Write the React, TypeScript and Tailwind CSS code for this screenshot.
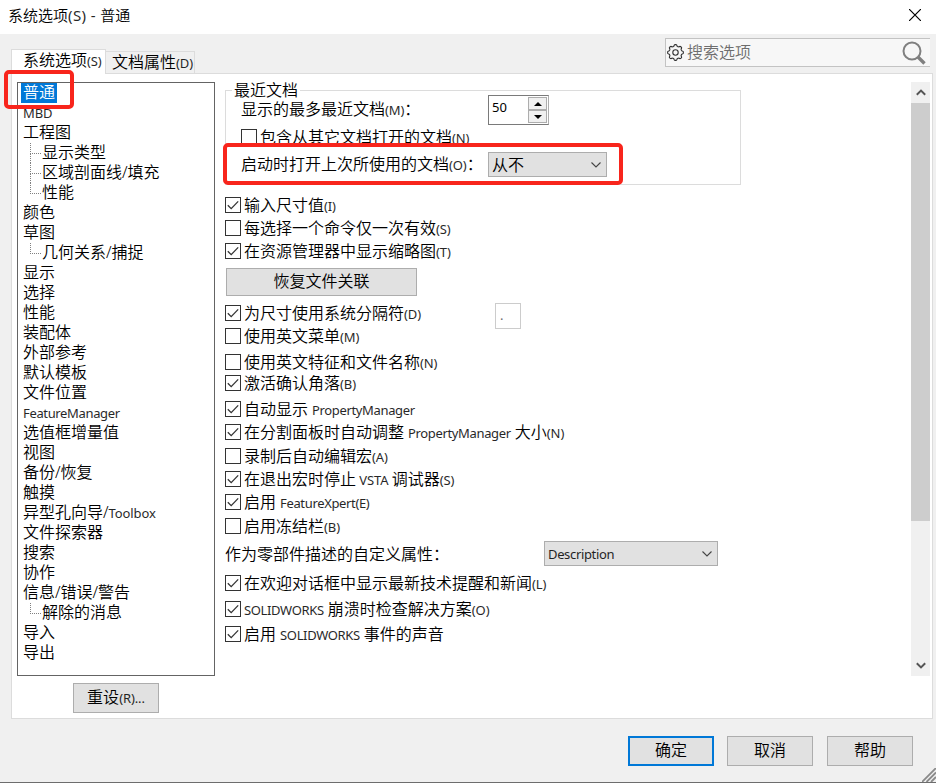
import clsx from "clsx";

type TreeNode = {
  label: string;
  child?: boolean;
  last?: boolean;
  selected?: boolean;
};

const tree: TreeNode[] = [
  { label: "普通", selected: true },
  { label: "MBD" },
  { label: "工程图" },
  { label: "显示类型", child: true },
  { label: "区域剖面线/填充", child: true },
  { label: "性能", child: true, last: true },
  { label: "颜色" },
  { label: "草图" },
  { label: "几何关系/捕捉", child: true, last: true },
  { label: "显示" },
  { label: "选择" },
  { label: "性能" },
  { label: "装配体" },
  { label: "外部参考" },
  { label: "默认模板" },
  { label: "文件位置" },
  { label: "FeatureManager" },
  { label: "选值框增量值" },
  { label: "视图" },
  { label: "备份/恢复" },
  { label: "触摸" },
  { label: "异型孔向导/Toolbox" },
  { label: "文件探索器" },
  { label: "搜索" },
  { label: "协作" },
  { label: "信息/错误/警告" },
  { label: "解除的消息", child: true, last: true },
  { label: "导入" },
  { label: "导出" },
];

// Latin runs are set smaller than the Chinese text around them
function Label({ text, className }: { text: string; className?: string }) {
  const runs = text.split(/([\x20-\x2e\x30-\x7e]+|\/(?=[A-Za-z]))/).filter(Boolean);
  return (
    <span className={clsx("whitespace-pre text-base leading-5", className)}>
      {runs.map((run, i) =>
        /^[\x20-\x7e]/.test(run) && run !== "/" ? (
          <span
            key={i}
            className={clsx(
              "text-[13px] opacity-85",
              run.length > 7 ? "tracking-[-0.35px] [word-spacing:1px]" : "tracking-[-0.1px]",
            )}
          >
            {run}
          </span>
        ) : (
          <span key={i} className="font-[350]">
            {run}
          </span>
        ),
      )}
    </span>
  );
}

function Checkbox({
  label,
  checked,
  className,
  children,
}: {
  label: string;
  checked?: boolean;
  className?: string;
  children?: React.ReactNode;
}) {
  return (
    <div className={clsx("flex h-4 items-start", className)}>
      <span className="flex size-4 shrink-0 items-center justify-center border border-[#333] bg-white">
        {checked ? (
          <svg width="14" height="14" viewBox="0 0 14 14" fill="none">
            <path d="M1.8 7.2 5.2 10.6 12.2 3.4" stroke="#333" strokeWidth="1.3" />
          </svg>
        ) : null}
      </span>
      <Label text={label} className="-mt-[2px] ml-[3px]" />
      {children}
    </div>
  );
}

function Select({ value, className }: { value: string; className?: string }) {
  return (
    <div
      className={clsx(
        "flex items-center justify-between border border-[#adadad] bg-[#e1e1e1] pr-[5px] pl-[3px]",
        className,
      )}
    >
      <Label text={value} />
      <svg width="10" height="6" viewBox="0 0 10 6" fill="none">
        <path d="M0.5 0.5 5 5 9.5 0.5" stroke="#444" strokeWidth="1.1" />
      </svg>
    </div>
  );
}

function Button({
  label,
  primary,
  className,
}: {
  label: string;
  primary?: boolean;
  className?: string;
}) {
  return (
    <button
      className={clsx(
        "flex items-center justify-center bg-[#e1e1e1] pb-0.5",
        primary ? "border-2 border-[#0078d7]" : "border border-[#adadad]",
        className,
      )}
    >
      <Label text={label} />
    </button>
  );
}

// eight soft lobes around the centre
const gearPoints = Array.from({ length: 96 }, (_, i) => {
  const a = (i / 96) * Math.PI * 2;
  const r = 7.1 + 0.8 * Math.tanh(2 * Math.cos(8 * a));
  return `${(8.5 + r * Math.cos(a)).toFixed(2)},${(8.5 + r * Math.sin(a)).toFixed(2)}`;
}).join(" ");

function GearIcon() {
  return (
    <svg
      className="mb-px"
      width="17"
      height="17"
      viewBox="0 0 17 17"
      fill="none"
      stroke="#333"
      strokeWidth="1.1"
    >
      <polygon points={gearPoints} strokeLinejoin="round" />
      <circle cx="8.5" cy="8.5" r="2.7" />
    </svg>
  );
}

function Tree() {
  return (
    <div className="h-[594px] w-[198px] border border-[#646464] bg-white">
      {tree.map((node, i) => (
        <div key={i} className="flex h-5">
          {node.child ? (
            <span className="ml-3 flex h-5 w-[11px] shrink-0 flex-col">
              <span className="h-[11px] border-b border-l border-dotted border-[#808080]" />
              {!node.last && <span className="h-[9px] border-l border-dotted border-[#808080]" />}
            </span>
          ) : null}
          <span
            className={clsx(
              "flex h-5 items-center pb-0.5",
              node.child ? "pl-px" : "ml-[3px] px-0.5",
              node.selected && "bg-[#0078d7] text-white",
            )}
          >
            <Label text={node.label} />
          </span>
        </div>
      ))}
    </div>
  );
}

function RecentDocuments() {
  return (
    <fieldset className="relative mt-2 h-[95px] w-[516px] border border-[#dcdcdc]">
      <span className="absolute -top-[11px] left-[6px] bg-white px-0.5 leading-5">
        <Label text="最近文档" />
      </span>
      <div className="mt-1 flex h-[30px] items-center pl-[15px]">
        <Label text="显示的最多最近文档(M)：" className="w-[247px] pb-0.5" />
        <div className="flex h-[30px] w-[61px] border border-[#7a7a7a] border-r-[#adadad] bg-white">
          <span className="flex-1 pt-px pl-[3px] text-[13px] leading-5">50</span>
          <div className="flex w-5 flex-col p-px pl-0">
            <span className="flex flex-1 items-center justify-center border border-[#adadad] bg-[#f0f0f0]">
              <svg width="8" height="4" viewBox="0 0 8 4">
                <path d="M0 4 4 0 8 4z" />
              </svg>
            </span>
            <span className="flex flex-1 items-center justify-center border border-[#adadad] bg-[#f0f0f0]">
              <svg width="8" height="4" viewBox="0 0 8 4">
                <path d="M0 0h8L4 4z" />
              </svg>
            </span>
          </div>
        </div>
      </div>
      <Checkbox label="包含从其它文档打开的文档(N)" className="mt-1 ml-[15px]" />
      <div className="mt-[7px] flex h-[25px] items-center pl-[15px]">
        <Label text="启动时打开上次所使用的文档(O)：" className="w-[247px]" />
        <Select value="从不" className="h-[25px] w-[119px]" />
      </div>
    </fieldset>
  );
}

function GeneralOptions() {
  return (
    <div className="ml-[10px] flex-1">
      <RecentDocuments />
      <Checkbox checked label="输入尺寸值(I)" className="mt-3" />
      <Checkbox label="每选择一个命令仅一次有效(S)" className="mt-[7px]" />
      <Checkbox checked label="在资源管理器中显示缩略图(T)" className="mt-[7px]" />
      <Button label="恢复文件关联" className="mt-[9px] ml-px h-7 w-[191px]" />
      <Checkbox checked label="为尺寸使用系统分隔符(D)" className="mt-[9px] w-[296px]">
        <span className="-mt-0.5 ml-auto h-[26px] w-[26px] shrink-0 border border-[#ccc] pl-1 text-[13px] leading-[22px] text-[#6d6d6d]">
          .
        </span>
      </Checkbox>
      <Checkbox label="使用英文菜单(M)" className="mt-[7px]" />
      <Checkbox label="使用英文特征和文件名称(N)" className="mt-[10px]" />
      <Checkbox checked label="激活确认角落(B)" className="mt-[5px]" />
      <Checkbox checked label="自动显示 PropertyManager" className="mt-[10px]" />
      <Checkbox checked label="在分割面板时自动调整 PropertyManager 大小(N)" className="mt-[7px]" />
      <Checkbox label="录制后自动编辑宏(A)" className="mt-2" />
      <Checkbox checked label="在退出宏时停止 VSTA 调试器(S)" className="mt-[7px]" />
      <Checkbox checked label="启用 FeatureXpert(E)" className="mt-[7px]" />
      <Checkbox label="启用冻结栏(B)" className="mt-2" />
      <div className="mt-[7px] flex h-[25px] items-center">
        <Label text="作为零部件描述的自定义属性：" className="w-[319px]" />
        <Select value="Description" className="h-[25px] w-[174px]" />
      </div>
      <Checkbox checked label="在欢迎对话框中显示最新技术提醒和新闻(L)" className="mt-[9px]" />
      <Checkbox checked label="SOLIDWORKS 崩溃时检查解决方案(O)" className="mt-[10px]" />
      <Checkbox checked label="启用 SOLIDWORKS 事件的声音" className="mt-[9px]" />
    </div>
  );
}

function Scrollbar() {
  return (
    <div className="mr-[2px] flex h-[594px] w-[19px] flex-col bg-[#f0f0f0]">
      <span className="flex h-[21px] items-center justify-center">
        <svg width="10" height="7" viewBox="0 0 10 7" fill="none">
          <path d="M0.8 5.8 5 1.6 9.2 5.8" stroke="#555" strokeWidth="2" />
        </svg>
      </span>
      <span className="h-[418px] bg-[#cdcdcd]" />
      <span className="mt-auto flex h-[21px] items-center justify-center">
        <svg width="10" height="7" viewBox="0 0 10 7" fill="none">
          <path d="M0.8 1.2 5 5.4 9.2 1.2" stroke="#555" strokeWidth="2" />
        </svg>
      </span>
    </div>
  );
}

export default function App() {
  return (
    <div className="relative flex h-[783px] w-[936px] flex-col overflow-hidden border-b border-[#6d6d6d] bg-[#f0f0f0] font-['Noto_Sans','Noto_Sans_CJK_SC',sans-serif] text-black">
      <header className="flex h-[34px] shrink-0 items-center justify-between bg-white pr-[15px] pb-1 pl-2">
        <span className="text-[15px] font-[350]">
          系统选项<span className="font-normal tracking-[0.4px] opacity-85">(S) - </span>普通
        </span>
        <svg width="12" height="12" viewBox="0 0 12 12" fill="none">
          <path d="M0 0 12 12M12 0 0 12" stroke="#000" strokeWidth="1.2" />
        </svg>
      </header>

      <div className="flex h-[39px] shrink-0 items-end pr-[6px] pl-[11px]">
        <div className="z-10 -mb-px flex h-[25px] w-[95px] items-center border border-b-0 border-[#dcdcdc] bg-white pb-[3px] pl-[11px]">
          <Label text="系统选项(S)" />
        </div>
        <div className="flex h-[22px] w-[89px] items-center border border-b-0 border-l-0 border-[#dcdcdc] pb-px pl-1.5">
          <Label text="文档属性(D)" />
        </div>
        <div className="mb-1.5 ml-auto flex h-[29px] w-[265px] items-center border border-r-0 border-[#c3c3c3] bg-[#f7f7f7] pr-1 pl-px">
          <GearIcon />
          <Label text="搜索选项" className="ml-[3px] pb-0.5 text-[#6d6d6d]" />
          <svg className="ml-auto" width="24" height="24" viewBox="0 0 24 24" fill="none" stroke="#808080">
            <circle cx="10" cy="10" r="8.5" strokeWidth="2" />
            <path d="M16 16 22.5 22.5" strokeWidth="3.4" />
          </svg>
        </div>
      </div>

      <main className="ml-[11px] flex h-[646px] w-[922px] shrink-0 border border-[#dcdcdc] bg-white pt-2 pl-[5px]">
        <div className="flex flex-col">
          <Tree />
          <Button label="重设(R)..." className="mt-[7px] ml-14 h-[30px] w-[86px]" />
        </div>
        <GeneralOptions />
        <Scrollbar />
      </main>

      <footer className="mt-[17px] flex pl-[628px]">
        <Button primary label="确定" className="h-[30px] w-[86px]" />
        <Button label="取消" className="ml-[13px] h-[30px] w-[86px]" />
        <Button label="帮助" className="ml-[14px] h-[30px] w-[86px]" />
      </footer>

      <svg className="absolute right-0 bottom-0" width="14" height="14" viewBox="0 0 14 14">
        <path d="M0 14 14 0M4.5 14 14 4.5M9 14 14 9" stroke="#8a8a8a" strokeWidth="1.8" />
      </svg>

      {/* callouts */}
      <div className="absolute top-[70px] left-1 z-20 h-[39px] w-[70px] rounded-[5px] border-4 border-[#f8251c]" />
      <div className="absolute top-[143px] left-[223px] z-20 h-[42px] w-[400px] rounded-[5px] border-4 border-[#f8251c]" />
    </div>
  );
}
